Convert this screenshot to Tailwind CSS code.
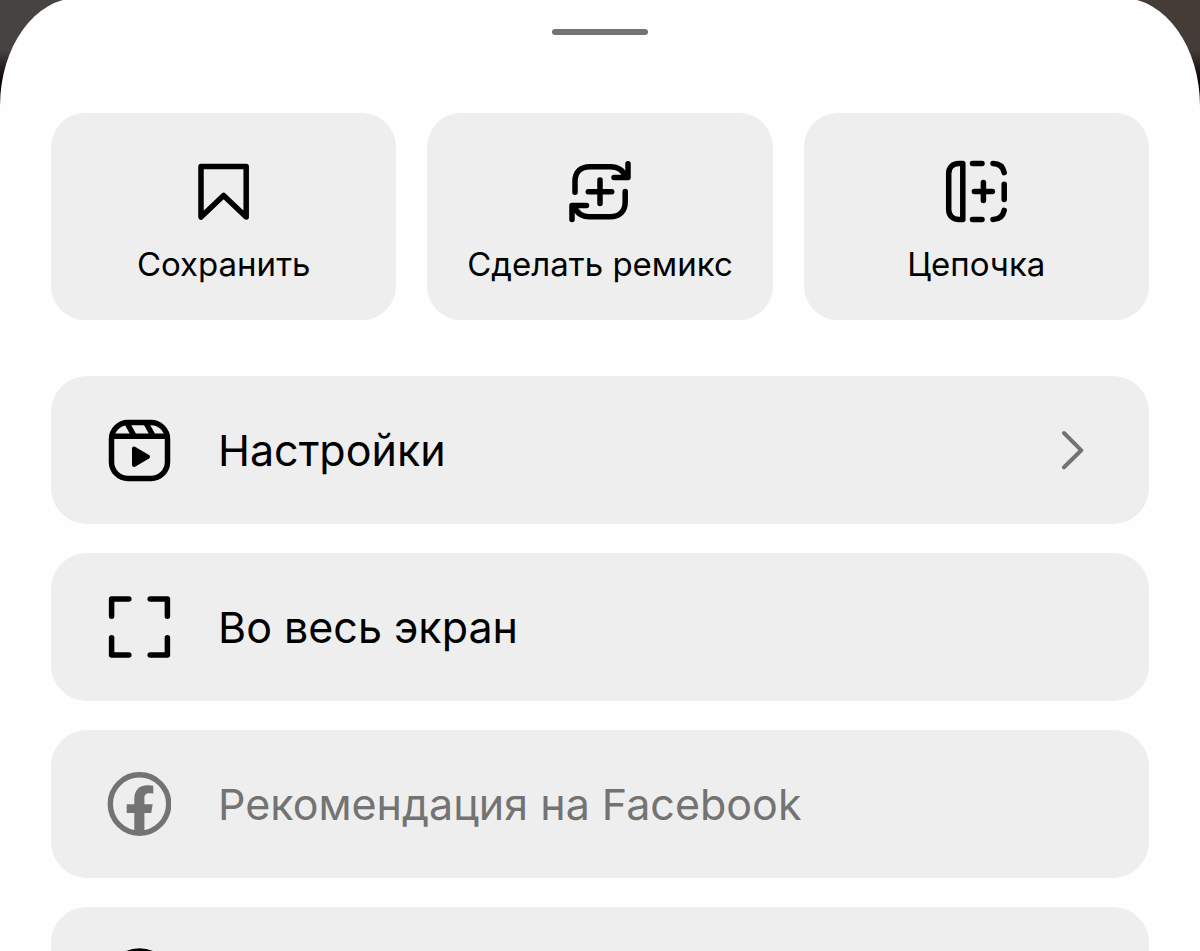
<!DOCTYPE html>
<html lang="ru">
<head>
  <meta charset="UTF-8" />
  <meta name="viewport" content="width=device-width, initial-scale=1.0"/>
  <title>Меню видео</title>
  <script src="https://cdn.jsdelivr.net/npm/@tailwindcss/browser@4"></script>
</head>
<body class="h-screen overflow-hidden bg-[linear-gradient(to_bottom,transparent_50px,#0d0404_80px),linear-gradient(to_right,#464443,#453b37)] font-['Inter',sans-serif] text-black">
  <main class="-mt-0.5 min-h-screen rounded-t-[78px_108px] bg-[#fefefe] px-[51px] pt-[31px]">
    <div class="mx-auto h-1.5 w-24 rounded-full bg-[#737373]"></div>

    <!-- Quick actions -->
    <div class="mt-[78px] grid grid-cols-3 gap-[31px]">
      <button type="button" class="flex flex-col items-center rounded-[34px] bg-[#eeeeee] pt-[47px] pb-9">
        <svg class="size-16" viewBox="0 0 64 64" fill="none" stroke="currentColor" stroke-width="5.5" stroke-linecap="round" stroke-linejoin="round" aria-hidden="true">
          <path d="M9 6.500h45.200V57L31.600 35.500 9 57z"/>
        </svg>
        <span class="mt-5 text-[33px] leading-10">Сохранить</span>
      </button>
      <button type="button" class="flex flex-col items-center rounded-[34px] bg-[#eeeeee] pt-[47px] pb-9">
        <svg class="size-16" viewBox="0 0 64 64" fill="none" stroke="currentColor" stroke-width="5.5" stroke-linecap="round" stroke-linejoin="round" aria-hidden="true">
          <path d="M7 32.3V21.5C7 12 12.5 6.7 22 6.7h20.5c7.5 0 12.5 3.5 15 10"/>
          <path d="M60 3.7v13.8H46"/>
          <path d="M57.2 31.5v10.300c0 9.500-5.500 14.900-15 14.900H21.500c-7.500 0-12.500-3.500-15-10"/>
          <path d="M4 59.5V45.5h14.5"/>
          <path d="M32 20v23.5M20.3 31.7h23.4"/>
        </svg>
        <span class="mt-5 text-[33px] leading-10">Сделать ремикс</span>
      </button>
      <button type="button" class="flex flex-col items-center rounded-[34px] bg-[#eeeeee] pt-[47px] pb-9">
        <svg class="size-16" viewBox="0 0 64 64" fill="none" stroke="currentColor" stroke-width="5.5" stroke-linecap="round" stroke-linejoin="round" aria-hidden="true">
          <path d="M18.8 3.6v55.8h-4C8.400 59.400 4.700 55.200 4.700 49.500v-36C4.700 7.800 8.400 3.600 14.800 3.600z"/>
          <path d="M28.500 3.600h9.500M49 3.600c6 0 10 3.400 11.200 9M60.200 24.300v15.200M28.500 59.400h9.500M49 59.400c6 0 10-3.400 11.200-9"/>
          <path d="M39.400 22.500v18M30.400 31.500h18"/>
        </svg>
        <span class="mt-5 text-[33px] leading-10">Цепочка</span>
      </button>
    </div>

    <!-- Menu -->
    <div class="mt-14 flex flex-col gap-[29px]">
      <button type="button" class="flex h-[148px] shrink-0 items-center rounded-[36px] bg-[#eeeeee] pr-16 pl-14 text-left">
        <svg class="size-16 shrink-0" viewBox="0 0 64 64" fill="none" stroke="currentColor" stroke-width="5.5" stroke-linecap="round" stroke-linejoin="round" aria-hidden="true">
          <rect x="4.5" y="4.5" width="56" height="56" rx="16.5"/>
          <path d="M5 18.3h55"/>
          <path d="M20 5l7 12.800M39 5l7 12.800"/>
          <path d="M27 30.500v16.500L41 38.700z" fill="currentColor" stroke-width="4"/>
        </svg>
        <span class="ml-[47px] flex-1 text-[43px] leading-[56px]">Настройки</span>
        <svg class="h-10 w-6 shrink-0 text-[#737373]" viewBox="0 0 24 40" fill="none" stroke="currentColor" stroke-width="4" stroke-linecap="round" stroke-linejoin="round" aria-hidden="true">
          <path d="M3 3L20.300 20.300 3 37.300"/>
        </svg>
      </button>
      <button type="button" class="flex h-[148px] shrink-0 items-center rounded-[36px] bg-[#eeeeee] pr-16 pl-14 text-left">
        <svg class="size-16 shrink-0" viewBox="0 0 64 64" fill="none" stroke="currentColor" stroke-width="5.5" stroke-linecap="round" stroke-linejoin="round" aria-hidden="true">
          <path d="M4.600 21.300V4.100h17.200M43.200 4.100h17.200v17.200M60.400 42.700v17.200H43.200M21.800 59.900H4.600V42.700"/>
        </svg>
        <span class="ml-[47px] flex-1 text-[43px] leading-[56px]">Во весь экран</span>
      </button>
      <button type="button" disabled class="flex h-[148px] shrink-0 items-center rounded-[36px] bg-[#eeeeee] pr-16 pl-14 text-left text-[#737373]">
        <svg class="size-16 shrink-0" viewBox="0 0 64 64" fill="none" aria-hidden="true">
          <circle cx="32.500" cy="32" r="29.200" stroke="currentColor" stroke-width="5.400"/>
          <path d="M27.300 60V41.100H19.700V32.300H27.300V27.700C27.300 18.300 31.800 13.300 40.700 13.300C42.900 13.300 44.900 13.500 46.300 13.900V21.600C45.300 21.400 44 21.300 42.400 21.300C38.700 21.300 37.400 23 37.400 26.300V32.300H45.700L44.200 41.100H37.400V60Z" fill="currentColor"/>
        </svg>
        <span class="ml-[47px] flex-1 text-[43px] leading-[56px]">Рекомендация на Facebook</span>
      </button>
      <button type="button" aria-label="Ещё" class="flex h-[148px] shrink-0 items-center rounded-[36px] bg-[#eeeeee] pr-16 pl-14 text-left">
        <svg class="size-16 shrink-0 overflow-visible" viewBox="0 0 64 64" fill="none" stroke="currentColor" stroke-width="5.5" aria-hidden="true">
          <circle cx="32.5" cy="32" r="30"/>
        </svg>
      </button>
    </div>
  </main>
</body>
</html>
